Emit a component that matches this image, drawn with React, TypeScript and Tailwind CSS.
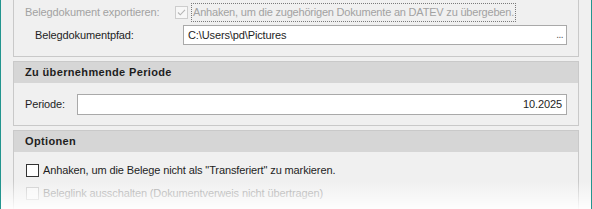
import React from "react";

function CheckBox({ checked, disabled }: { checked?: boolean; disabled?: boolean }) {
  return (
    <div
      className={
        "w-[13px] h-[13px] shrink-0 border flex items-center justify-center " +
        (disabled ? "border-[#cdcdcd] bg-[#f7f7f7]" : "border-[#333333] bg-white")
      }
    >
      {checked && (
        <svg width="11" height="11" viewBox="0 0 11 11">
          <path d="M2 5.5 L4.3 7.8 L9 2.8" fill="none" stroke={disabled ? "#b5b5b5" : "#222"} strokeWidth="1.1" />
        </svg>
      )}
    </div>
  );
}

export default function App() {
  return (
    <div className="relative w-[592px] h-[209px] overflow-hidden bg-[#f0f0f0] border-l border-r border-[#23958f] font-['Liberation_Sans',Arial,sans-serif] text-[11px] leading-none text-[#1e1e1e] whitespace-nowrap tracking-[-0.12px]">
      <div className="ml-[12px] w-[566px] flex flex-col">
        {/* Panel 1 (top cut off) */}
        <div className="h-[57px] border-x border-b border-[#c9c9c9] pt-[3px] flex flex-col">
          <div className="flex items-center h-[19px]">
            <div className="w-[161px] pl-[11px] text-[#a2a2a2]">Belegdokument exportieren:</div>
            <CheckBox checked disabled />
            <div className="ml-[3px] h-[19px] w-[325px] border border-dotted border-[#7a7a7a] pl-[1px] flex items-center text-[#a2a2a2] tracking-[-0.2px]">
              Anhaken, um die zugehörigen Dokumente an DATEV zu übergeben.
            </div>
          </div>
          <div className="mt-[3px] flex items-center h-[20px]">
            <div className="w-[169px] pl-[21px]">Belegdokumentpfad:</div>
            <div className="w-[384px] h-[20px] border border-[#a9a9a9] bg-white pl-[4px] pr-[3px] flex items-center justify-between">
              <span>C:\Users\pd\Pictures</span>
              <span className="text-[#555] tracking-[-0.5px] text-[10px]">...</span>
            </div>
          </div>
        </div>

        {/* Panel 2 */}
        <div className="mt-[4px] border border-[#c9c9c9] flex flex-col">
          <div className="h-[21px] bg-[#d6d6d6] pl-[11px] flex items-center font-bold tracking-[0.35px]">Zu übernehmende Periode</div>
          <div className="pt-[11px] pb-[10px] flex items-center">
            <div className="w-[63px] pl-[11px]">Periode:</div>
            <div className="flex-1 mr-[11px] h-[21px] border border-[#a9a9a9] bg-white pr-[4px] flex items-center justify-end">
              10.2025
            </div>
          </div>
        </div>

        {/* Panel 3 */}
        <div className="mt-[4px] border border-[#c9c9c9] flex flex-col h-[90px]">
          <div className="h-[21px] bg-[#d6d6d6] pl-[11px] flex items-center font-bold tracking-[0.35px]">Optionen</div>
          <div className="pt-[12px] pl-[12px] flex flex-col gap-[10px]">
            <div className="flex items-center h-[13px]">
              <CheckBox />
              <span className="ml-[4px]">Anhaken, um die Belege nicht als "Transferiert" zu markieren.</span>
            </div>
            <div className="flex items-center h-[13px]">
              <CheckBox disabled />
              <span className="ml-[4px] text-[#a2a2a2]">Beleglink ausschalten (Dokumentverweis nicht übertragen)</span>
            </div>
          </div>
        </div>
      </div>
      <div className="absolute inset-x-0 bottom-0 h-[28px] bg-linear-to-b from-transparent to-white/90" />
    </div>
  );
}
